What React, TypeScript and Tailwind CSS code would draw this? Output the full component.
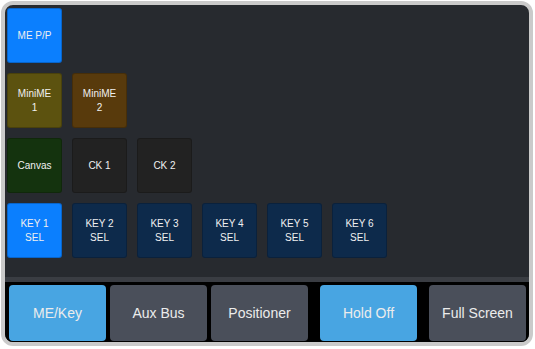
import React from 'react';

interface TileProps {
  label: string[];
  color: string;
}

function Tile({ label, color }: TileProps) {
  return (
    <div
      className={`w-[55px] h-[55px] rounded-[3px] border border-black/20 flex flex-col items-center justify-center text-[10px] leading-[14px] text-[#f0f0f0] ${color}`}
    >
      {label.map((line, i) => (
        <span key={i}>{line}</span>
      ))}
    </div>
  );
}

interface NavButtonProps {
  label: string;
  active?: boolean;
}

function NavButton({ label, active }: NavButtonProps) {
  return (
    <div
      className={`w-[97px] h-[56px] rounded-[4px] flex items-center justify-center text-[14px] text-[#ececec] ${active ? 'bg-[#48a5e2]' : 'bg-[#4a4f5a]'}`}
    >
      {label}
    </div>
  );
}

function App() {
  const rows: TileProps[][] = [
    [{ label: ['ME P/P'], color: 'bg-[#0b7ffe]' }],
    [
      { label: ['MiniME', '1'], color: 'bg-[#5c520f]' },
      { label: ['MiniME', '2'], color: 'bg-[#583a0c]' },
    ],
    [
      { label: ['Canvas'], color: 'bg-[#14330e]' },
      { label: ['CK 1'], color: 'bg-[#222222]' },
      { label: ['CK 2'], color: 'bg-[#222222]' },
    ],
    [
      { label: ['KEY 1', 'SEL'], color: 'bg-[#0b7ffe]' },
      { label: ['KEY 2', 'SEL'], color: 'bg-[#0d2a4b]' },
      { label: ['KEY 3', 'SEL'], color: 'bg-[#0d2a4b]' },
      { label: ['KEY 4', 'SEL'], color: 'bg-[#0d2a4b]' },
      { label: ['KEY 5', 'SEL'], color: 'bg-[#0d2a4b]' },
      { label: ['KEY 6', 'SEL'], color: 'bg-[#0d2a4b]' },
    ],
  ];

  return (
    <div className="w-[535px] h-[349px] bg-white pt-px pl-px" style={{ fontFamily: '"Liberation Sans", Arial, sans-serif' }}>
      <div className="w-[532px] h-[345px] rounded-[12px] border-4 border-[#cacaca] bg-[#272a2f] flex flex-col overflow-hidden">
        <div className="h-[272px] pl-[2px] pt-[3px] flex flex-col gap-[10px]">
          {rows.map((row, r) => (
            <div key={r} className="flex gap-[10px]">
              {row.map((tile, i) => (
                <Tile key={i} {...tile} />
              ))}
            </div>
          ))}
        </div>
        <div className="h-[5px] bg-[#3a3d43]" />
        <div className="flex-1 bg-black px-[4px] pt-[3px] flex">
          <div className="flex gap-[4px]">
            <NavButton label="ME/Key" active />
            <NavButton label="Aux Bus" />
            <NavButton label="Positioner" />
          </div>
          <div className="flex gap-[12px] ml-[12px]">
            <NavButton label="Hold Off" active />
            <NavButton label="Full Screen" />
          </div>
        </div>
      </div>
    </div>
  );
}

export default App;
